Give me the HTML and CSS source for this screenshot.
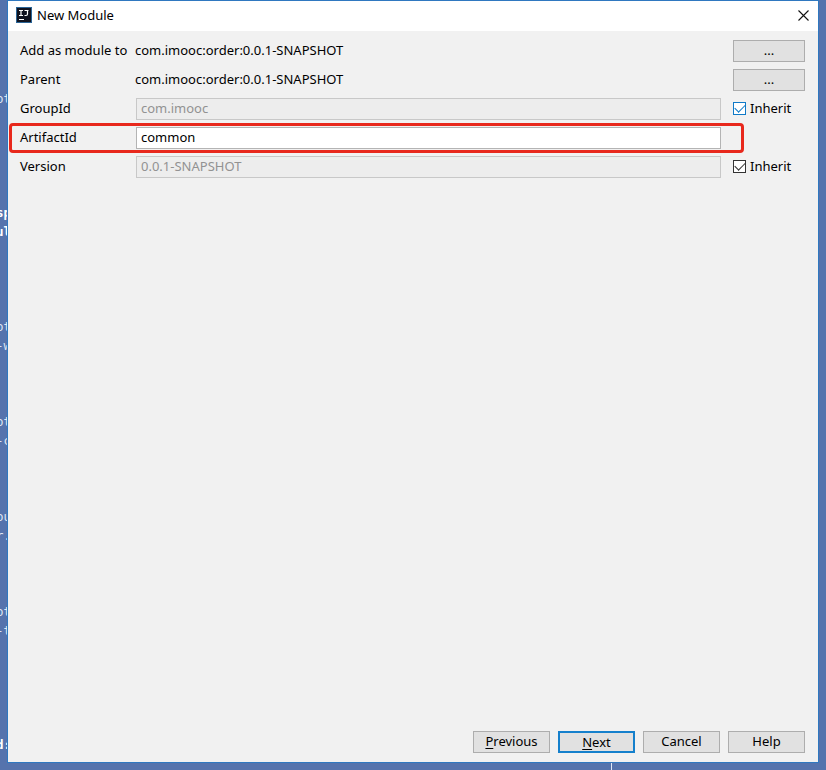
FILE: index.html
```html
<!DOCTYPE html>
<html lang="en">
<head>
<meta charset="utf-8">
<title>New Module</title>
<link rel="stylesheet" href="styles.css">
</head>
<body>
<div class="gutter"><pre class="code">ot





<b>sp</b>
<b>ul</b>




ot
-w



ot
-c



ou
r.



ot
-t





<b>d:</b></pre></div>
<main class="dialog">
  <header class="titlebar">
    <svg class="logo" viewBox="0 0 16 16" aria-hidden="true">
      <rect width="16" height="16" fill="#2a6496"/>
      <rect x="1" y="1" width="14" height="14" fill="#10131f"/>
      <path d="M3 3.500h4M5 3.500v5M3 8.500h4M8.500 3.500h4M11.500 3.500v3.500q0 1.500-1.500 1.500H8.500M3 12.500h5" fill="none" stroke="#fff" stroke-width="1.200"/>
    </svg>
    <h1>New Module</h1>
    <button class="close" type="button" aria-label="Close">
      <svg viewBox="0 0 11 11" aria-hidden="true"><path d="M.5 .5l10 10M10.500 .5l-10 10" stroke="#111" stroke-width="1.100"/></svg>
    </button>
  </header>
  <form class="content">
    <div class="row">
      <span>Add as module to</span>
      <span>com.imooc:order:0.0.1-SNAPSHOT</span>
      <button class="btn" type="button" aria-label="Choose module">...</button>
    </div>
    <div class="row">
      <span>Parent</span>
      <span>com.imooc:order:0.0.1-SNAPSHOT</span>
      <button class="btn" type="button" aria-label="Choose parent">...</button>
    </div>
    <div class="row">
      <label for="group">GroupId</label>
      <input class="field" id="group" type="text" value="com.imooc" disabled>
      <label class="inherit"><input class="check active" type="checkbox" checked>Inherit</label>
    </div>
    <div class="row highlighted">
      <label for="artifact">ArtifactId</label>
      <input class="field" id="artifact" type="text" value="common">
    </div>
    <div class="row">
      <label for="version">Version</label>
      <input class="field" id="version" type="text" value="0.0.1-SNAPSHOT" disabled>
      <label class="inherit"><input class="check" type="checkbox" checked>Inherit</label>
    </div>
  </form>
  <footer class="actions">
    <button class="btn" type="button"><u>P</u>revious</button>
    <button class="btn primary" type="button"><u>N</u>ext</button>
    <button class="btn" type="button">Cancel</button>
    <button class="btn" type="button">Help</button>
  </footer>
</main>
<div class="below"></div>
</body>
</html>
```
FILE: styles.css
```css
* {
  box-sizing: border-box;
}

body {
  margin: 0;
  height: 100vh;
  overflow: hidden;
  display: grid;
  grid-template-columns: 7px 1fr 7px;
  grid-template-rows: 1fr 7px;
  background: #5573ad;
  color: #000;
  font: 13px/20px "Noto Sans", sans-serif;
}

.gutter {
  grid-row: 1 / 3;
  display: flex;
  justify-content: center;
  overflow: hidden;
  padding-top: 90px;
}

.code {
  flex: none;
  margin: 0;
  color: #dfe8f5;
  font: 12px/19px "DejaVu Sans Mono", monospace;
}

.code b {
  color: #fff;
}

.dialog {
  display: flex;
  flex-direction: column;
  background: #f1f1f1;
  border: 1px solid #2f78c0;
}

.titlebar {
  display: flex;
  align-items: center;
  gap: 5px;
  height: 30px;
  padding: 0 9px 2px 8px;
  background: #fff;
}

.logo {
  width: 16px;
  height: 16px;
}

h1 {
  flex: 1;
  margin: 0;
  font-size: 13px;
  font-weight: 400;
}

.close {
  display: flex;
  padding: 0;
  border: 0;
  background: none;
}

.close svg {
  width: 11px;
  height: 11px;
}

.content {
  flex: 1;
  display: flex;
  flex-direction: column;
  gap: 7px;
  padding: 9px 13px 0 12px;
}

.row {
  position: relative;
  display: grid;
  grid-template-columns: 103px 1fr 72px;
  column-gap: 12px;
  align-items: start;
  height: 22px;
  white-space: nowrap;
}

.highlighted::after {
  content: "";
  position: absolute;
  inset: -4px 61px -4px -11px;
  border: 3px solid #e8281c;
  border-radius: 4px;
  pointer-events: none;
}

.field {
  min-width: 0;
  height: 22px;
  margin-left: 1px;
  padding: 0 4px 2px;
  border: 1px solid #b4b4b4;
  background: #fff;
  color: #000;
  font: inherit;
}

.field:disabled {
  border-color: #c8c8c8;
  background: #ededed;
  color: #929292;
}

.btn {
  height: 22px;
  padding: 0 0 2px;
  border: 1px solid #adadad;
  background: #e1e1e1;
  color: #000;
  font: inherit;
  line-height: 18px;
}

.inherit {
  display: flex;
  align-items: center;
  gap: 4px;
}

.check {
  appearance: none;
  display: grid;
  place-items: center;
  width: 13px;
  height: 13px;
  margin: 0;
  border: 1px solid #333;
  background: #fff;
  color: #333;
}

.check:checked::before {
  content: "";
  width: 9px;
  height: 5px;
  margin-bottom: 3px;
  border: solid currentColor;
  border-width: 0 0 1px 1px;
  transform: rotate(-45deg);
}

.check.active {
  border-color: #0f7ac8;
  color: #0f7ac8;
}

.actions {
  display: flex;
  justify-content: flex-end;
  gap: 8px;
  padding: 0 13px 9px;
}

.actions .btn {
  width: 77px;
}

.actions .primary {
  border: 2px solid #1580cc;
}

.actions u {
  text-underline-offset: 2px;
}

.below {
  grid-column: 2;
  justify-self: end;
  width: 1px;
  margin-right: 207px;
  background: #dfe8f5;
}
```
